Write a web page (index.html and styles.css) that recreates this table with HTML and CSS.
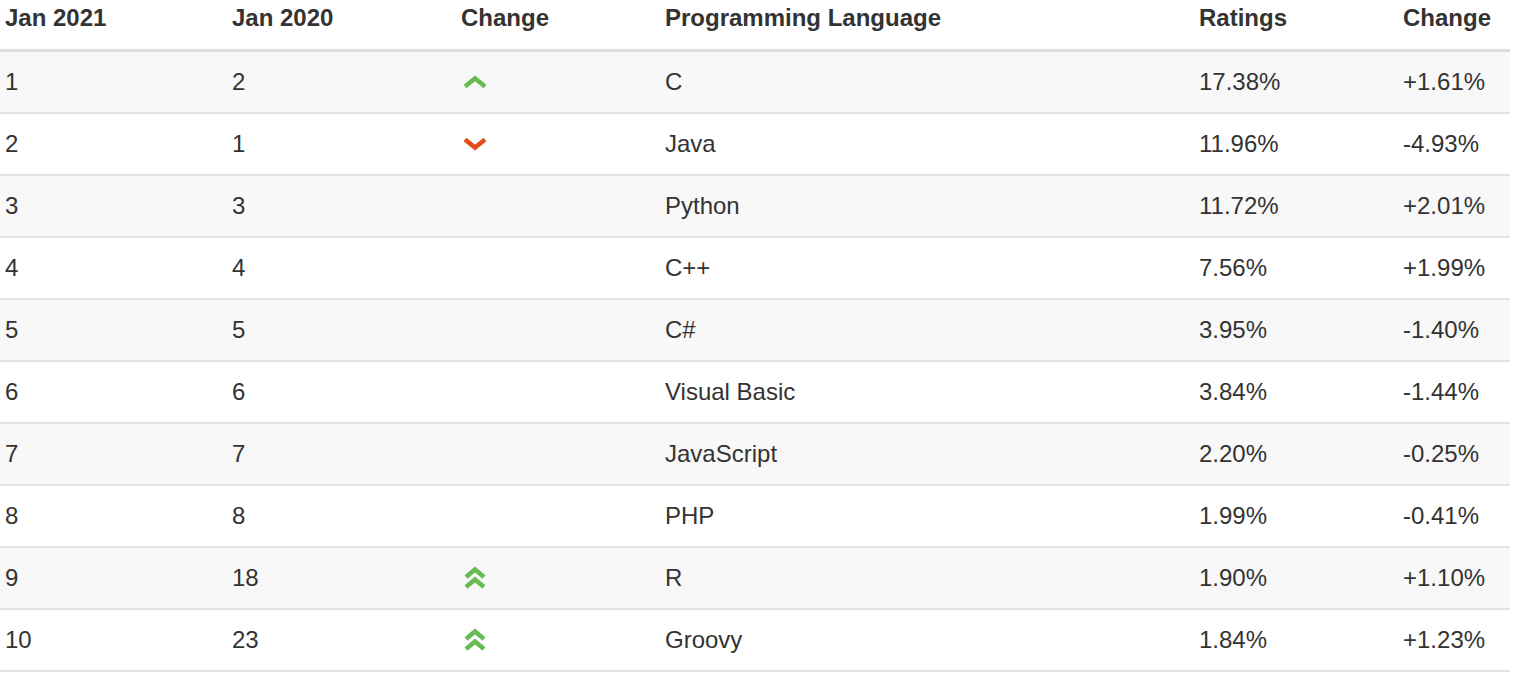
FILE: index.html
```html
<!DOCTYPE html>
<html>
<head>
<meta charset="utf-8">
<link rel="stylesheet" href="styles.css">
</head>
<body>
<table class="rank">
  <colgroup>
    <col class="c1"><col class="c2"><col class="c3"><col class="c4"><col class="c5"><col class="c6">
  </colgroup>
  <thead>
    <tr><th>Jan 2021</th><th>Jan 2020</th><th>Change</th><th>Programming Language</th><th>Ratings</th><th>Change</th></tr>
  </thead>
  <tbody>
    <tr><td>1</td><td>2</td><td><svg class="ico" width="26" height="14" viewBox="0 0 26 14"><path d="M3 11.5 L13 3.5 L23 11.5" class="up"/></svg></td><td>C</td><td>17.38%</td><td>+1.61%</td></tr>
    <tr><td>2</td><td>1</td><td><svg class="ico" width="26" height="14" viewBox="0 0 26 14"><path d="M3 2.5 L13 10.5 L23 2.5" class="down"/></svg></td><td>Java</td><td>11.96%</td><td>-4.93%</td></tr>
    <tr><td>3</td><td>3</td><td></td><td>Python</td><td>11.72%</td><td>+2.01%</td></tr>
    <tr><td>4</td><td>4</td><td></td><td>C++</td><td>7.56%</td><td>+1.99%</td></tr>
    <tr><td>5</td><td>5</td><td></td><td>C#</td><td>3.95%</td><td>-1.40%</td></tr>
    <tr><td>6</td><td>6</td><td></td><td>Visual Basic</td><td>3.84%</td><td>-1.44%</td></tr>
    <tr><td>7</td><td>7</td><td></td><td>JavaScript</td><td>2.20%</td><td>-0.25%</td></tr>
    <tr><td>8</td><td>8</td><td></td><td>PHP</td><td>1.99%</td><td>-0.41%</td></tr>
    <tr><td>9</td><td>18</td><td><svg class="ico" width="26" height="24" viewBox="0 0 26 24"><path d="M4 11 L13 3.5 L22 11" class="up"/><path d="M4 21 L13 13.5 L22 21" class="up"/></svg></td><td>R</td><td>1.90%</td><td>+1.10%</td></tr>
    <tr><td>10</td><td>23</td><td><svg class="ico" width="26" height="24" viewBox="0 0 26 24"><path d="M4 11 L13 3.5 L22 11" class="up"/><path d="M4 21 L13 13.5 L22 21" class="up"/></svg></td><td>Groovy</td><td>1.84%</td><td>+1.23%</td></tr>
  </tbody>
</table>
</body>
</html>
```
FILE: styles.css
```css
html, body {
  margin: 0;
  padding: 0;
  background: #fff;
}
body {
  font-family: "Liberation Sans", Arial, Helvetica, sans-serif;
  color: #333;
  font-size: 24px;
}
.rank {
  width: 1510px;
  border-collapse: collapse;
  table-layout: fixed;
}
.c1 { width: 227px; }
.c2 { width: 229px; }
.c3 { width: 204px; }
.c4 { width: 534px; }
.c5 { width: 204px; }
.c6 { width: 112px; }
.rank th {
  text-align: left;
  font-weight: bold;
  height: 49px;
  padding: 0 5px;
  line-height: 36px;
  vertical-align: top;
  border-bottom: 3px solid #dddddd;
}
.rank td {
  padding: 0 5px;
  height: 60px;
  line-height: 60px;
  vertical-align: middle;
  border-bottom: 2px solid #e3e3e3;
  white-space: nowrap;
}
.rank tbody tr:nth-child(odd) td {
  background: #f8f8f8;
}
.ico {
  display: block;
  margin-left: 1px;
}
.up, .down {
  fill: none;
  stroke-width: 4.5;
  stroke-linecap: butt;
  stroke-linejoin: miter;
}
.up { stroke: #66bb55; }
.down { stroke: #e34a1c; }
```
